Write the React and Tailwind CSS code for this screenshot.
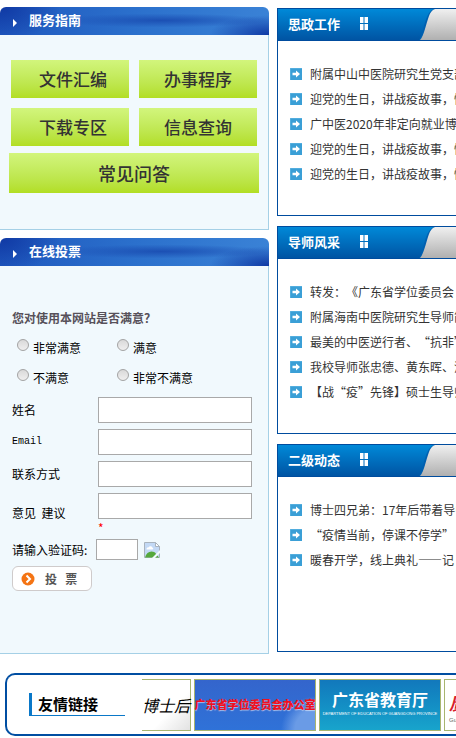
const guideLinks = ['文件汇编', '办事程序', '下载专区', '信息查询'];

const voteOptions = ['非常满意', '满意', '不满意', '非常不满意'];

const voteFields = [
  { id: 'name', label: '姓名' },
  { id: 'email', label: 'Email', latin: true },
  { id: 'contact', label: '联系方式' },
  { id: 'advice', label: '意见  建议', required: true },
];

const newsSections = [
  {
    title: '思政工作',
    items: [
      '附属中山中医院研究生党支部',
      '迎党的生日，讲战疫故事，情',
      '广中医2020年非定向就业博士',
      '迎党的生日，讲战疫故事，情',
      '迎党的生日，讲战疫故事，情',
    ],
  },
  {
    title: '导师风采',
    items: [
      '转发：《广东省学位委员会',
      '附属海南中医院研究生导师简',
      '最美的中医逆行者、“抗非”',
      '我校导师张忠德、黄东晖、潘',
      '【战“疫”先锋】硕士生导师',
    ],
  },
  {
    title: '二级动态',
    items: [
      '博士四兄弟：17年后带着导师',
      '“疫情当前，停课不停学”',
      '暖春开学，线上典礼——记',
    ],
  },
];

function ArrowIcon() {
  return (
    <svg className="size-3 shrink-0" viewBox="0 0 12 12" aria-hidden="true">
      <rect width="12" height="12" fill="#3a9fd6" />
      <path d="M0 12V0h12" fill="none" stroke="#6bbce6" />
      <path d="M2.5 4.8H6V2.4L10 6 6 9.6V7.2H2.5z" fill="#fff" />
    </svg>
  );
}

function BrokenImage() {
  return (
    <svg className="size-4 shrink-0" viewBox="0 0 16 16" role="img" aria-label="验证码">
      <path d="M.5.5h11l4 4v11H.5z" fill="#c3d9f5" stroke="#a9b3bd" />
      <path d="M11.5.5v4h4z" fill="#fff" stroke="#a9b3bd" />
      <path d="M2.5 7.5c0-1.6 1-2.3 2.2-2.1C5.2 3.8 8 3.9 8.2 5.6c1.3.1 1.5 1.9.3 1.9z" fill="#fff" />
      <path d="M1 15.500c1-4 3.600-6 6.500-6 2 0 3.500.9 4.500 2.200L15 15.500z" fill="#55a83c" />
      <path d="M8 16l8-8v3l-5 5z" fill="#f1f9fd" />
    </svg>
  );
}

/* Left column box with the blue rounded header */
function SidePanel({ title, children }) {
  return (
    <section>
      <header className="flex h-7 items-center gap-3 rounded-t-md bg-[radial-gradient(ellipse_60px_34px_at_0%_0%,#1039a4,transparent),radial-gradient(ellipse_60px_20px_at_100%_100%,#1039a4,transparent),radial-gradient(ellipse_110px_7px_at_60%_48%,#1c50b4,transparent),linear-gradient(90deg,#1f58be,#2b70cc_50%,#3a82d6)] pl-[13px]">
        <svg className="mt-1 h-2 w-1" viewBox="0 0 4 8" aria-hidden="true">
          <path d="M0 0l4 4-4 4z" fill="#fff" />
        </svg>
        <h2 className="pb-0.5 text-[13px] leading-5 font-bold text-white">{title}</h2>
      </header>
      <div className="border-r border-b border-[#a5d0e6] bg-[#f1f9fd]">{children}</div>
    </section>
  );
}

function ServiceGuide() {
  return (
    <SidePanel title="服务指南">
      <nav className="flex flex-col gap-[7px] px-[9px] pt-[25px] pb-9 text-[#333]">
        <div className="grid grid-cols-2 gap-2.5 px-0.5">
          {guideLinks.map((text) => (
            <a key={text} href="#" className="flex h-[38px] items-center justify-center bg-linear-to-b from-[#d2f57c] to-[#b2de22] text-[17px] font-medium odd:pl-1.5">
              {text}
            </a>
          ))}
        </div>
        <a href="#" className="flex h-10 items-center justify-center bg-linear-to-b from-[#d2f57c] to-[#b2de22] text-lg font-medium">
          常见问答
        </a>
      </nav>
    </SidePanel>
  );
}

function OnlineVote() {
  return (
    <SidePanel title="在线投票">
      <form className="flex flex-col gap-1.5 px-3 pt-[42px] pb-[62px] text-xs text-black">
        <fieldset>
          <legend className="leading-5 font-bold text-[#57515a]">您对使用本网站是否满意？</legend>
          <div className="grid grid-cols-[100px_1fr] gap-y-1 pt-[7px] pl-[5px]">
            {voteOptions.map((text) => (
              <label key={text} className="flex h-[26px] items-center gap-1">
                <input
                  type="radio"
                  name="vote"
                  className="mb-1.5 size-3 appearance-none rounded-full border border-[#a3a3a3] bg-linear-to-b from-[#d9d9d9] to-[#efefef] checked:bg-[#666]"
                />
                {text}
              </label>
            ))}
          </div>
        </fieldset>

        {voteFields.map(({ id, label, latin, required }) => (
          <div key={id} className="flex items-center">
            <label
              htmlFor={id}
              className={latin ? "w-[86px] shrink-0 font-['Liberation_Mono',monospace] text-[10px]" : 'w-[86px] shrink-0 whitespace-pre'}
            >
              {label}
            </label>
            <div className="flex w-[154px] flex-col">
              <input id={id} type="text" className="h-[26px] w-full border border-[#a9a9a9] bg-white px-1" />
              {required && <span className="h-3.5 leading-[18px] text-[#f00]">*</span>}
            </div>
          </div>
        ))}

        <div className="flex items-center">
          <label htmlFor="code" className="w-[84px] shrink-0">请输入验证码:</label>
          <input id="code" type="text" className="mr-1.5 h-[21px] w-[42px] border border-[#a9a9a9] bg-white px-1" />
          <BrokenImage />
        </div>

        <button
          type="submit"
          className="flex h-[25px] w-20 items-center gap-2.5 rounded-md border border-[#cfcbcb] bg-white pl-2 font-bold text-[#555]"
        >
          <svg className="size-3.5" viewBox="0 0 14 14" aria-hidden="true">
            <circle cx="7" cy="7" r="6.500" fill="#f47414" />
            <path d="M5.500 3.500L9 7l-3.500 3.500" fill="none" stroke="#fff" strokeWidth="2" />
          </svg>
          <span className="whitespace-pre">投   票</span>
        </button>
      </form>
    </SidePanel>
  );
}

/* Right column box, runs on to the right edge of the window */
function NewsPanel({ title, items }) {
  return (
    <section className="min-h-52 overflow-hidden border border-r-0 border-[#004c9e] bg-white">
      <header className="flex h-8 items-stretch border-b border-[#004c9e] bg-linear-to-b from-[#0089d8] to-[#0054a3]">
        <div className="flex w-[141px] shrink-0 items-center gap-5 pb-0.5 pl-2.5">
          <h2 className="text-[13px] font-bold text-white">{title}</h2>
          <svg className="h-[15px] w-2" viewBox="0 0 8 15" aria-hidden="true">
            <path d="M0 1h3.500v6H0zM4.500 1H8v6H4.500zM0 8h3.500v6H0zM4.500 8H8v6H4.500z" fill="#fff" />
          </svg>
        </div>
        <svg className="h-full w-4 shrink-0" viewBox="0 0 16 31" preserveAspectRatio="none" aria-hidden="true">
          <defs>
            <linearGradient id="tab" x1="0" y1="0" x2="0" y2="1">
              <stop offset="0" stopColor="#f0f0f0" />
              <stop offset="1" stopColor="#b0b0b0" />
            </linearGradient>
          </defs>
          <path d="M0 31C5 24 6 1 16 0v31z" fill="#0060b0" />
          <path d="M1 31C5 27 7 15 10 7c1-3 3-6 6-7v31z" fill="url(#tab)" />
        </svg>
        <div className="flex-1 bg-linear-to-b from-[#f0f0f0] to-[#b0b0b0]" />
      </header>
      <ul className="pt-5 pl-3 text-xs text-[#333]">
        {items.map((text, i) => (
          <li key={i} className="flex h-[25px] items-center gap-2">
            <ArrowIcon />
            <a href="#" className="whitespace-nowrap">{text}</a>
          </li>
        ))}
      </ul>
    </section>
  );
}

function FriendLinks() {
  return (
    <footer className="mt-[19px] ml-[5px] flex h-[63px] items-center overflow-hidden rounded-l-[10px] border-2 border-r-0 border-[#004ea2] bg-white pl-[22px]">
      <h2 className="mr-[17px] flex h-[23px] w-24 shrink-0 items-center border-b border-l-3 border-b-[#0a78c8] border-l-[#0a78c8] pl-1.5 text-[15px] font-bold text-black">
        友情链接
      </h2>
      <div className="flex min-w-0 flex-1 gap-[3px] overflow-hidden">
        <a href="#" className="flex h-[52px] w-[49px] shrink-0 items-center justify-center border border-l-0 border-[#a8b570] bg-linear-to-br from-white from-60% to-[#e2e2e2] text-base whitespace-nowrap text-black italic">
          博士后
        </a>
        <a href="#" className="flex h-[52px] w-[122px] shrink-0 items-center justify-center border border-[#a8b570] bg-[radial-gradient(circle_at_100%_100%,#6a9be6_20px,transparent_34px),linear-gradient(#3465cc,#2f72d8)] text-[11px] font-black whitespace-nowrap text-[#f01020] text-shadow-[0_1px_1px_#ffffff90]">
          广东省学位委员会办公室
        </a>
        <a href="#" className="flex h-[52px] w-[122px] shrink-0 flex-col items-center border border-[#a8b570] bg-linear-to-b from-[#1278bc] to-[#18a4cc] pt-[7px] whitespace-nowrap text-white">
          <span className="text-base font-bold">广东省教育厅</span>
          <span className="font-['Liberation_Sans',sans-serif] text-[4px]">DEPARTMENT OF EDUCATION OF GUANGDONG PROVINCE</span>
        </a>
        <a href="#" className="flex h-[52px] w-[122px] shrink-0 flex-col border border-[#a8b570] bg-white pt-2 pl-1 text-[#d8202c]">
          <span className="text-lg font-bold italic">廣州中醫</span>
          <span className="font-['Liberation_Sans',sans-serif] text-[6px] text-[#666]">Guangzhou</span>
        </a>
      </div>
    </footer>
  );
}

export default function App() {
  return (
    <div lang="zh-CN" className="overflow-hidden bg-white pb-0.5 font-['Noto_Sans_CJK_SC',sans-serif] [text-spacing-trim:space-all]">
      <main className="flex gap-2 pt-[7px]">
        <div className="flex w-[269px] shrink-0 flex-col gap-2">
          <ServiceGuide />
          <OnlineVote />
        </div>
        <div className="flex min-w-0 flex-1 flex-col gap-2.5 pt-px">
          {newsSections.map((section) => (
            <NewsPanel key={section.title} {...section} />
          ))}
        </div>
      </main>
      <FriendLinks />
    </div>
  );
}
